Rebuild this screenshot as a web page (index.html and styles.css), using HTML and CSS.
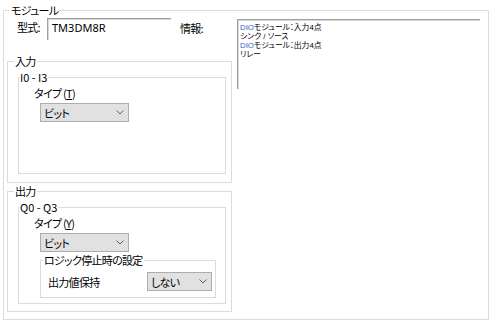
FILE: index.html
```html
<!DOCTYPE html>
<html lang="ja">

<head>
    <meta charset="UTF-8">
    <title>モジュール</title>
    <link rel="stylesheet" href="styles.css">
</head>

<body>
    <div class="group module">
        <span class="group-title">モジュール</span>
        <div class="module-body">
            <div class="left-col">
                <div class="model-row">
                    <span class="field-label">型式:</span>
                    <div class="text-box">TM3DM8R</div>
                    <span class="info-label">情報:</span>
                </div>

                <div class="group io-group input-group">
                    <span class="group-title">入力</span>
                    <div class="group range-group input-range">
                        <span class="group-title range-title">I0 - I3</span>
                        <div class="type-label">タイプ (<u>T</u>)</div>
                        <div class="combo type-combo">
                            <span>ビット</span>
                            <svg class="chevron" width="8" height="5" viewBox="0 0 8 5">
                                <polyline points="0.5,0.5 4,4 7.5,0.5" fill="none" stroke="#606060" stroke-width="1" />
                            </svg>
                        </div>
                    </div>
                </div>

                <div class="group io-group output-group">
                    <span class="group-title">出力</span>
                    <div class="group range-group output-range">
                        <span class="group-title range-title">Q0 - Q3</span>
                        <div class="type-label">タイプ (<u>Y</u>)</div>
                        <div class="combo type-combo">
                            <span>ビット</span>
                            <svg class="chevron" width="8" height="5" viewBox="0 0 8 5">
                                <polyline points="0.5,0.5 4,4 7.5,0.5" fill="none" stroke="#606060" stroke-width="1" />
                            </svg>
                        </div>
                        <div class="group stop-group">
                            <span class="group-title stop-title">ロジック停止時の設定</span>
                            <div class="hold-row">
                                <span>出力値保持</span>
                                <div class="combo hold-combo">
                                    <span>しない</span>
                                    <svg class="chevron" width="8" height="5" viewBox="0 0 8 5">
                                        <polyline points="0.5,0.5 4,4 7.5,0.5" fill="none" stroke="#606060" stroke-width="1" />
                                    </svg>
                                </div>
                            </div>
                        </div>
                    </div>
                </div>
            </div>

            <div class="info-box">
                <div class="info-line"><span class="dio">DIO</span>モジュール：入力4点</div>
                <div class="info-line">シンク / ソース</div>
                <div class="info-line"><span class="dio">DIO</span>モジュール：出力4点</div>
                <div class="info-line">リレー</div>
            </div>
        </div>
    </div>
</body>

</html>
```

FILE: styles.css
```css
html,
body {
    margin: 0;
    height: 320px;
    overflow: hidden;
    background: #fff;
}

body {
    box-sizing: border-box;
    padding: 10px 0 0 3px;
    font-family: "Noto Sans CJK JP", "Noto Sans", sans-serif;
    font-size: 11px;
    font-feature-settings: "palt";
    letter-spacing: -0.7px;
    color: #000;
}

/* group boxes */
.group {
    border: 1px solid #dcdcdc;
    box-sizing: border-box;
}

.group-title {
    display: block;
    width: fit-content;
    height: 14px;
    line-height: 14px;
    margin: -8px 0 0 6px;
    padding: 0 1px;
    background: #fff;
    white-space: nowrap;
}

.module {
    width: 486px;
    height: 310px;
}

.module-body {
    display: flex;
    margin-top: 1px;
}

.left-col {
    width: 228px;
}

.model-row {
    display: flex;
    height: 22px;
    padding-left: 13px;
    line-height: 14px;
}

.field-label {
    width: 30px;
    margin-top: 2px;
}

.text-box {
    width: 124px;
    height: 22px;
    box-sizing: border-box;
    padding: 2px 0 0 4px;
    border-style: solid;
    border-width: 1px 0 0 1px;
    border-color: #a0a0a0;
    box-shadow: inset 1px 1px 0 #d8d8d8;
    font-family: "Noto Sans", sans-serif;
    letter-spacing: 0;
}

.info-label {
    margin: 3px 0 0 9px;
}

.io-group {
    width: 225px;
    margin-left: 3px;
}

.input-group {
    margin-top: 21px;
    padding-bottom: 8px;
}

.output-group {
    margin-top: 8px;
    padding-bottom: 7px;
}

.range-group {
    width: 208px;
    margin: 9px 0 0 10px;
}

.range-title {
    margin-left: 0;
    letter-spacing: 0;
}

.input-range {
    padding-bottom: 51px;
}

.output-range {
    padding-bottom: 5px;
}

.type-label {
    height: 14px;
    line-height: 14px;
    margin: 2px 0 0 15px;
}

/* combo boxes */
.combo {
    display: flex;
    align-items: center;
    justify-content: space-between;
    height: 19px;
    box-sizing: border-box;
    padding: 0 4px 0 3px;
    border: 1px solid #adadad;
    background: #e1e1e1;
    line-height: 14px;
}

.type-combo {
    width: 89px;
    margin: 3px 0 0 21px;
}

.stop-group {
    width: 176px;
    margin: 8px 0 0 21px;
    padding-bottom: 6px;
}

.stop-title {
    margin-left: 2px;
}

.hold-row {
    display: flex;
    align-items: center;
    justify-content: space-between;
    margin-top: 5px;
    padding: 0 3px 0 7px;
}

.hold-combo {
    width: 65px;
}

/* info text */
.info-box {
    width: 243px;
    height: 70px;
    box-sizing: border-box;
    margin: 1px 0 0 5px;
    padding: 3px 0 0 2px;
    border-style: solid;
    border-width: 1px 0 0 1px;
    border-color: #a0a0a0;
    box-shadow: inset 1px 1px 0 #d8d8d8;
    font-family: "Liberation Sans", "Noto Sans CJK JP", sans-serif;
    font-size: 7.8px;
    letter-spacing: 0;
}

.info-line {
    height: 9px;
    line-height: 9px;
}

.dio {
    color: #2a62c8;
}
```
